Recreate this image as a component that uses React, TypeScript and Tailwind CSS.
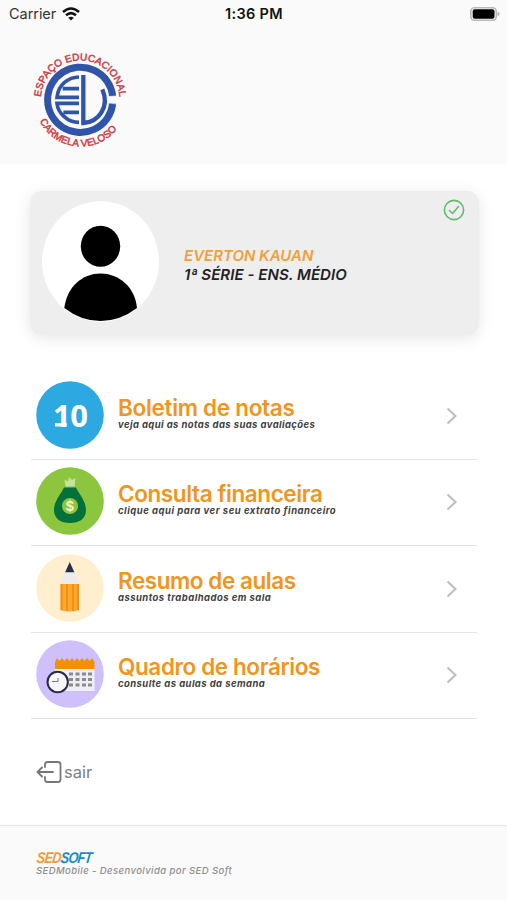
import type { ReactNode } from "react";

function SchoolLogo() {
  return (
    <svg className="h-[130px] w-[120px]" viewBox="0 0 360 390" fill="none">
      <defs>
        <path id="logo-top" d="M63 190A118 118 0 1 1 298 190" />
        <path id="logo-bottom" d="M46 202A138 138 0 0 0 319 202" />
      </defs>
      <path d="M278 167A98 98 0 1 0 278 192" stroke="#3055a8" strokeWidth="21" />
      <path d="M288 167H266M288 192H266" stroke="#3055a8" strokeWidth="2" />
      <path
        d="M177 111C145 112 115 133 111 172H177M177 146H128M177 190H111C114 220 143 247 177 247M177 217H130"
        stroke="#3055a8"
        strokeWidth="11"
      />
      <path d="M190 105V249C236 247 270 200 247 148" stroke="#3055a8" strokeWidth="13" />
      <g fill="#d23a3f" fontFamily="Liberation Sans, Arial, sans-serif" fontSize="30" stroke="#d23a3f" strokeWidth="1.4">
        <text>
          <textPath href="#logo-top" startOffset="19" textLength="354" lengthAdjust="spacing">
            ESPAÇO EDUCACIONAL
          </textPath>
        </text>
        <text>
          <textPath href="#logo-bottom" startOffset="43" textLength="278" lengthAdjust="spacing">
            CARMELA VELOSO
          </textPath>
        </text>
      </g>
    </svg>
  );
}

function GradesIcon() {
  return (
    <svg className="h-[68px] w-[68px]" viewBox="0 0 68 68">
      <circle cx="34" cy="34" r="33.8" fill="#2ba9e0" />
      <text x="34.5" y="45.5" textAnchor="middle" textLength="35" fontFamily="Noto Sans, sans-serif" fontWeight="700" fontSize="31" fill="#fff">
        10
      </text>
      <path d="M19 42.2H30.8V45.5H19Z" fill="#fff" />
    </svg>
  );
}

function MoneyIcon() {
  return (
    <svg className="h-[68px] w-[68px]" viewBox="0 0 68 68">
      <circle cx="34" cy="34" r="33.8" fill="#8cc63f" />
      <path d="M29.5 19.5L28.5 12.5L32 14.5L33 10L36 13L39.5 11L38.5 19.5Z" fill="#c5e59a" />
      <path d="M28 20.5H40C43 27 50 34 50 43C50 52 43 56 34 56S18 52 18 43C18 34 25 27 28 20.5Z" fill="#04703a" />
      <circle cx="34" cy="39" r="8" fill="#8cc63f" />
      <text x="34" y="43.8" textAnchor="middle" fontFamily="Inter, sans-serif" fontWeight="600" fontSize="13.5" fill="#f2f5df">
        $
      </text>
    </svg>
  );
}

function PencilIcon() {
  return (
    <svg className="h-[68px] w-[68px]" viewBox="0 0 68 68">
      <circle cx="34" cy="34" r="33.8" fill="#ffefcf" />
      <path d="M33.7 8L38.5 18.5H29Z" fill="#2a2c4d" />
      <path d="M29 18.5H38.5L43 27V31H24.5V27Z" fill="#ececec" />
      <path d="M24.5 30H43V56Q33.7 59 24.5 56Z" fill="#ffa72f" />
      <path d="M25.6 30V56.3M31 30V57M37 30V57M42 30V56.3" stroke="#f08e16" strokeWidth="1.8" />
    </svg>
  );
}

function CalendarIcon() {
  const columns = [33, 39.5, 46, 52];
  const rows = [32.5, 38, 43.5];
  return (
    <svg className="h-[68px] w-[68px]" viewBox="0 0 68 68">
      <circle cx="34" cy="34" r="33.8" fill="#cfc0fc" />
      <path d="M19 26H58.5V51H19Z" fill="#efeff3" />
      <path d="M19 29V22L21 18L23.5 21L26 18L28.5 21L31 18L33.5 21L36 18L38.5 21L41 18L43.5 21L46 18L48.5 21L51 18L53.5 21L56 18L58.5 22V29Z" fill="#f29100" />
      {rows.map((y) => columns.map((x) => <rect key={`${x}-${y}`} x={x} y={y} width="4" height="3" fill="#8b8b8b" />))}
      <circle cx="21.7" cy="42" r="10.2" fill="#f5f5fa" stroke="#2d2947" strokeWidth="2" />
      <path d="M16 41.5H22V38" fill="none" stroke="#77758a" strokeWidth="1" />
    </svg>
  );
}

type ItemProps = { icon: ReactNode; title: string; subtitle: string; titleClass: string; subtitleClass: string };

function MenuItem({ icon, title, subtitle, titleClass, subtitleClass }: ItemProps) {
  return (
    <li className="flex h-[86.5px] items-center border-b border-[#e3e3e3] pr-[19px] pb-[2px] pl-[4.5px]">
      {icon}
      <div className="-mt-[4px] ml-[14.5px] flex-1 whitespace-nowrap">
        <h2 className={`text-[22.5px] leading-[24px] font-semibold text-[#f1951c] ${titleClass}`}>{title}</h2>
        <p className={`text-[9.5px] leading-[10px] font-bold text-[#3f3f3f] italic ${subtitleClass}`}>{subtitle}</p>
      </div>
      <svg className="mt-[2px] h-[18px] w-[12px]" viewBox="0 0 12 18" fill="none">
        <path d="M1.5 1.5L9.5 9L1.5 16.5" stroke="#bdbdbd" strokeWidth="2" />
      </svg>
    </li>
  );
}

export default function App() {
  return (
    <div className="flex h-[900px] w-[507px] flex-col overflow-hidden bg-white font-['Inter',sans-serif]">
      <header className="h-[164px] shrink-0 bg-[#fafafa]">
        <div className="grid h-[28px] grid-cols-3 items-center pr-[6px] pl-[7px] text-[14.5px] leading-none">
          <div className="flex items-center gap-[6px] pl-[2px] text-[#333]">
            <span className="tracking-[-0.05px]">Carrier</span>
            <svg className="h-[14px] w-[18px]" viewBox="0 0 18 14" fill="none" stroke="#111" strokeWidth="2.5">
              <path d="M1 5Q9-2 17 5M4 8.3Q9 4 14 8.3" />
              <path d="M6.2 10.7L9 13.5L11.8 10.7Q9 8.7 6.2 10.7Z" fill="#111" stroke="none" />
            </svg>
          </div>
          <span className="text-center font-semibold tracking-[0.3px] text-[#111]">1:36 PM</span>
          <svg className="h-[14px] w-[31px] justify-self-end" viewBox="0 0 31 14">
            <rect x="0.8" y="0.8" width="25.5" height="12.4" rx="3.8" fill="#fafafa" stroke="#b8b8b8" strokeWidth="1.6" />
            <rect x="2.7" y="2.3" width="21.8" height="9.4" rx="2" fill="#000" />
            <path d="M27.5 4.5Q32 7 27.5 9.5Z" fill="#b8b8b8" />
          </svg>
        </div>
        <div className="pt-[12px] pl-[20px]">
          <SchoolLogo />
        </div>
      </header>

      <section className="mt-[27px] ml-[30px] flex h-[144px] w-[449px] shrink-0 rounded-[12px] bg-[#eee] pt-[10px] pl-[12px] shadow-[0_3px_16px_rgba(0,0,0,0.10)]">
        <svg className="h-[121px] w-[118px]" viewBox="0 0 118 121">
          <ellipse cx="58.5" cy="60.5" rx="58.5" ry="60.3" fill="#fff" />
          <ellipse cx="58.5" cy="45.3" rx="19.7" ry="20.5" />
          <path d="M22.3 107C25 86 40 72.5 58.5 72.5S93 86 95 107Q78 120 58.5 120T22.3 107Z" />
        </svg>
        <div className="mt-[45px] ml-[24px] flex-1 text-[15px] leading-[19px] font-semibold whitespace-nowrap italic">
          <p className="text-[#f1a03a]">EVERTON KAUAN</p>
          <p className="tracking-[0.05px] text-[#222]">1ª SÉRIE - ENS. MÉDIO</p>
        </div>
        <svg className="-mt-[2px] mr-[14px] h-[22px] w-[22px]" viewBox="0 0 22 22" fill="none" stroke="#60bd6d">
          <circle cx="11" cy="11" r="9.6" strokeWidth="1.6" />
          <path d="M6.5 11.5L9.5 14.5L15.5 7.5" strokeWidth="1.6" strokeLinecap="round" strokeLinejoin="round" />
        </svg>
      </section>

      <ul className="mt-[38px] ml-[31px] w-[446px] shrink-0">
        <MenuItem icon={<GradesIcon />} title="Boletim de notas" subtitle="veja aqui as notas das suas avaliações" titleClass="tracking-[-0.3px]" subtitleClass="tracking-[0.4px]" />
        <MenuItem icon={<MoneyIcon />} title="Consulta financeira" subtitle="clique aqui para ver seu extrato financeiro" titleClass="tracking-[-0.4px]" subtitleClass="tracking-[0.5px]" />
        <MenuItem icon={<PencilIcon />} title="Resumo de aulas" subtitle="assuntos trabalhados em sala" titleClass="tracking-[-0.45px]" subtitleClass="tracking-[0.45px]" />
        <MenuItem icon={<CalendarIcon />} title="Quadro de horários" subtitle="consulte as aulas da semana" titleClass="tracking-[-0.4px]" subtitleClass="tracking-[0.42px]" />
      </ul>

      <button className="mt-[41px] ml-[36px] flex h-[24px] w-fit shrink-0 items-center gap-[2px] text-[16.5px] leading-none text-[#808080]">
        <svg className="h-[22px] w-[26px]" viewBox="0 0 26 22" fill="none" stroke="#777" strokeWidth="1.8" strokeLinecap="round" strokeLinejoin="round">
          <path d="M9 6V3.5Q9 1 11.5 1H22Q24.5 1 24.5 3.5V18.5Q24.5 21 22 21H11.5Q9 21 9 18.5V16M17 11H1.5M6 6.5L1.5 11L6 15.5" />
        </svg>
        <span>sair</span>
      </button>

      <footer className="mt-auto h-[75px] shrink-0 border-t border-[#e6e6e6] bg-[#fafafa] pt-[24px] pl-[36px] whitespace-nowrap italic">
        <p className="h-[15px] w-fit origin-bottom-left scale-x-[0.82] -skew-x-[8deg] font-['Liberation_Sans',Arial,sans-serif] text-[15.5px] leading-[15px] font-bold tracking-[-0.9px]">
          <span className="text-[#f29a32]">SED</span>
          <span className="text-[#188acb]">SOFT</span>
        </p>
        <p className="text-[9.5px] leading-[12px] font-medium tracking-[0.42px] text-[#8e8e8e]">SEDMobile - Desenvolvida por SED Soft</p>
      </footer>
    </div>
  );
}
